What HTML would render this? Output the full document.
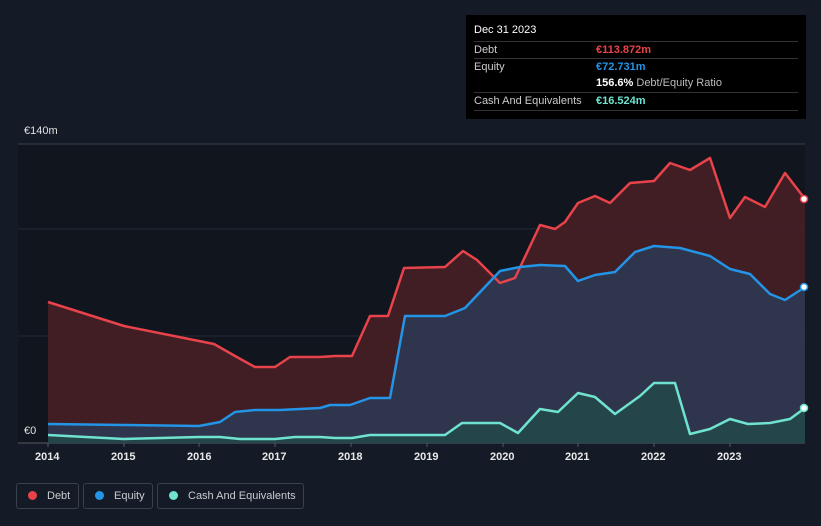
<!DOCTYPE html>
<html><head><meta charset="utf-8"><style>
html,body{margin:0;width:821px;height:526px;overflow:hidden}
body{background:#151b26;font-family:"Liberation Sans",sans-serif;position:relative}
.tt{position:absolute;left:466px;top:15px;width:340px;height:104px;background:#000;color:#ccc;font-size:11px}
.tt .r{position:absolute;left:8px;width:324px;border-top:1px solid #333;height:17px;line-height:17px}
.tt .v{position:absolute;left:122px;font-weight:bold}
.leg{position:absolute;top:483px;height:26px;border:1px solid #3a404c;border-radius:3px;color:#c8cbd0;font-size:11px;line-height:24px;box-sizing:border-box;white-space:nowrap}
.leg i{display:inline-block;width:9px;height:9px;border-radius:50%;margin:0 10px 0 11px;vertical-align:-1px}
.ax{position:absolute;top:451px;color:#e8e8e8;font-size:11px;font-weight:bold}
</style></head><body>
<svg width="821" height="526" style="position:absolute;left:0;top:0">
<rect x="18" y="144" width="787" height="299" fill="#10151e"/>
<line x1="18" y1="144" x2="805" y2="144" stroke="#3a404a"/>
<line x1="18" y1="229" x2="805" y2="229" stroke="#232a35"/>
<line x1="18" y1="336" x2="805" y2="336" stroke="#232a35"/>
<line x1="18" y1="443" x2="805" y2="443" stroke="#555b66"/>
<g stroke="#555b66"><line x1="48" y1="443" x2="48" y2="447"/><line x1="124" y1="443" x2="124" y2="447"/><line x1="199" y1="443" x2="199" y2="447"/><line x1="275" y1="443" x2="275" y2="447"/><line x1="351" y1="443" x2="351" y2="447"/><line x1="427" y1="443" x2="427" y2="447"/><line x1="503" y1="443" x2="503" y2="447"/><line x1="578" y1="443" x2="578" y2="447"/><line x1="654" y1="443" x2="654" y2="447"/><line x1="730" y1="443" x2="730" y2="447"/></g>
<polygon fill="#4a1f26" opacity="0.85" points="48,443 48,302 124,326 199,341 214,344 235,356 255,367 275,367 290,357 320,357 335,356 352,356 370,316 388,316 404,268 445,267 463,251 477,260 500,283 515,278 540,225 555,229 565,222 578,203 595,196 610,203 630,183 654,181 670,163 690,170 710,158 730,218 745,197 765,207 785,173 805,199 805,443"/>
<polygon fill="#2d3852" opacity="0.9" points="48,443 48,424 124,425 199,426 220,422 235,412 255,410 280,410 300,409 320,408 330,405 350,405 370,398 390,398 405,316 445,316 465,308 500,271 520,267 540,265 565,266 578,281 595,275 615,272 635,252 654,246 680,248 710,256 730,269 750,274 770,294 785,300 805,287 805,443"/>
<polygon fill="#24484a" opacity="0.9" points="48,443 48,435 124,439 199,437 220,437 240,439 275,439 295,437 320,437 335,438 352,438 370,435 400,435 445,435 462,423 500,423 518,433 540,409 558,412 578,393 595,397 615,414 640,396 654,383 675,383 690,434 710,429 730,419 748,424 770,423 790,419 805,408 805,443"/>
<g fill="none" stroke-width="2.5" stroke-linejoin="round">
<polyline stroke="#e8434a" points="48,302 124,326 199,341 214,344 235,356 255,367 275,367 290,357 320,357 335,356 352,356 370,316 388,316 404,268 445,267 463,251 477,260 500,283 515,278 540,225 555,229 565,222 578,203 595,196 610,203 630,183 654,181 670,163 690,170 710,158 730,218 745,197 765,207 785,173 805,199"/>
<polyline stroke="#2394e6" points="48,424 124,425 199,426 220,422 235,412 255,410 280,410 300,409 320,408 330,405 350,405 370,398 390,398 405,316 445,316 465,308 500,271 520,267 540,265 565,266 578,281 595,275 615,272 635,252 654,246 680,248 710,256 730,269 750,274 770,294 785,300 805,287"/>
<polyline stroke="#6fe3cf" points="48,435 124,439 199,437 220,437 240,439 275,439 295,437 320,437 335,438 352,438 370,435 400,435 445,435 462,423 500,423 518,433 540,409 558,412 578,393 595,397 615,414 640,396 654,383 675,383 690,434 710,429 730,419 748,424 770,423 790,419 805,408"/>
</g>
<circle cx="804" cy="199" r="3.5" fill="#fff" stroke="#e8434a" stroke-width="1.5"/>
<circle cx="804" cy="287" r="3.5" fill="#fff" stroke="#2394e6" stroke-width="1.5"/>
<circle cx="804" cy="408" r="3.5" fill="#fff" stroke="#6fe3cf" stroke-width="1.5"/>
</svg>
<div style="position:absolute;left:24px;top:125px;color:#e0e0e0;font-size:11px">€140m</div>
<div style="position:absolute;left:24px;top:425px;color:#e0e0e0;font-size:11px">€0</div>
<div class="ax" style="left:35px">2014</div><div class="ax" style="left:111px">2015</div><div class="ax" style="left:187px">2016</div><div class="ax" style="left:262px">2017</div><div class="ax" style="left:338px">2018</div><div class="ax" style="left:414px">2019</div><div class="ax" style="left:490px">2020</div><div class="ax" style="left:565px">2021</div><div class="ax" style="left:641px">2022</div><div class="ax" style="left:717px">2023</div>
<div class="tt">
<div style="position:absolute;left:8px;top:9px;color:#fff;font-size:11px">Dec 31 2023</div>
<div class="r" style="top:26px">Debt<span class="v" style="color:#e8434a">€113.872m</span></div>
<div class="r" style="top:43px">Equity<span class="v" style="color:#2394e6">€72.731m</span></div>
<div class="r" style="top:60px;border-top:none"><span class="v" style="color:#fff">156.6% <span style="color:#bbb;font-weight:normal">Debt/Equity Ratio</span></span></div>
<div class="r" style="top:77px">Cash And Equivalents<span class="v" style="color:#6fe3cf">€16.524m</span></div>
<div class="r" style="top:95px;height:0"></div>
</div>
<div class="leg" style="left:16px;width:63px"><i style="background:#e8434a"></i>Debt</div>
<div class="leg" style="left:83px;width:70px"><i style="background:#2394e6"></i>Equity</div>
<div class="leg" style="left:157px;width:147px"><i style="background:#6fe3cf"></i>Cash And Equivalents</div>
</body></html>
